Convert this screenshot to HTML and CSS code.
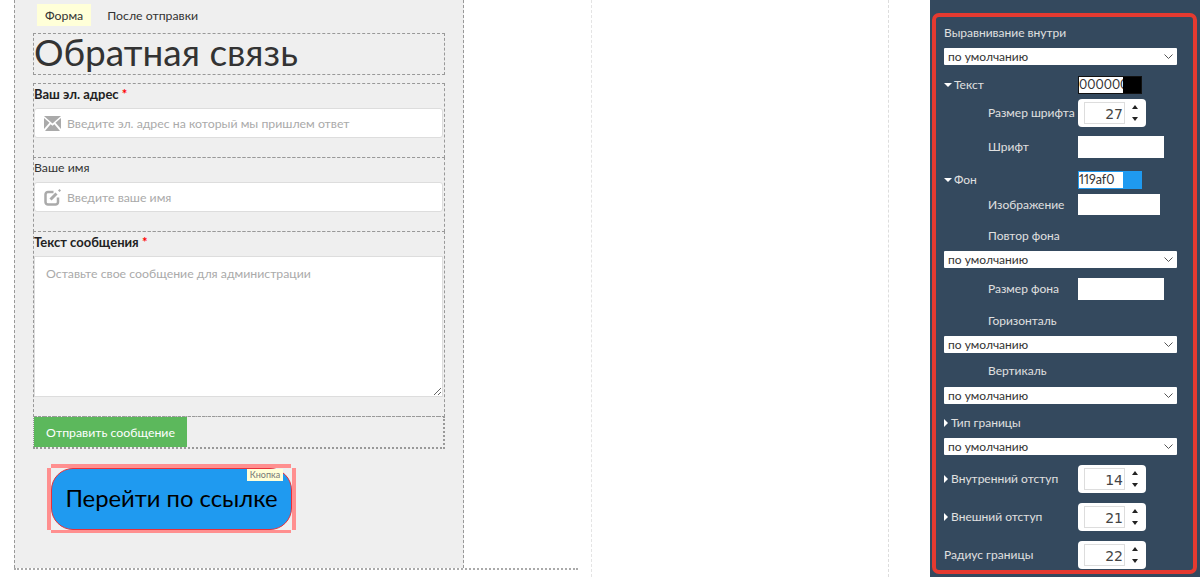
FILE: index.html

```html
<!DOCTYPE html>
<html lang="en">
<head>
    <meta charset="UTF-8">
    <meta name="viewport" content="width=device-width, initial-scale=1.0">
    <title>Редактор формы</title>
    <link rel="stylesheet" href="styles.css">
</head>
<body>
    <div class="page">
        <div class="canvas">
            <div class="workspace">
                <div class="pageEdge">
                    <div class="panel">
                        <div class="tabs">
                            <div class="tab activeTab">Форма</div>
                            <div class="tab">После отправки</div>
                        </div>

                        <div class="block titleBlock"><h1>Обратная связь</h1></div>

                        <div class="block fieldBlock">
                            <label class="fieldLabel boldLabel">Ваш эл. адрес <span class="required">*</span></label>
                            <div class="inputWrap">
                                <svg class="inputIcon" viewBox="0 0 17 15"><path d="M0 0h17L8.500 7.500z"/><path d="M0 2v11l5.500-6.200z"/><path d="M17 2v11l-5.500-6.200z"/><path d="M1 15l5.600-6.800 1.900 1.600 1.900-1.600L16 15z"/></svg>
                                <input type="text" placeholder="Введите эл. адрес на который мы пришлем ответ">
                            </div>
                        </div>

                        <div class="block fieldBlock">
                            <label class="fieldLabel">Ваше имя</label>
                            <div class="inputWrap">
                                <svg class="inputIcon" viewBox="0 0 17 17"><path class="iconStroke" d="M9.500 3H4A2.500 2.500 0 0 0 1.500 5.500V13A2.500 2.500 0 0 0 4 15.500h7.500A2.500 2.500 0 0 0 14 13V8.500"/><path class="iconPen" d="M6.500 10.500l6-6"/><path d="M14 1.500l1.500-1.500 1.500 1.500-1.500 1.500z"/></svg>
                                <input type="text" placeholder="Введите ваше имя">
                            </div>
                        </div>

                        <div class="block messageBlock">
                            <label class="fieldLabel boldLabel">Текст сообщения <span class="required">*</span></label>
                            <textarea placeholder="Оставьте свое сообщение для администрации"></textarea>
                        </div>

                        <div class="block submitBlock">
                            <button class="submitButton">Отправить сообщение</button>
                        </div>

                        <div class="linkFrame">
                            <span class="handle handleTop"></span>
                            <span class="handle handleRight"></span>
                            <span class="handle handleBottom"></span>
                            <span class="handle handleLeft"></span>
                            <button class="linkButton">Перейти по ссылке</button>
                            <span class="linkBadge">Кнопка</span>
                        </div>
                    </div>
                </div>
            </div>
            <div class="gutter"></div>
        </div>

        <div class="sidebar">
            <div class="settings">
                <div class="row mt7">Выравнивание внутри</div>
                <select class="mt6"><option>по умолчанию</option></select>

                <div class="row mt11">
                    <span class="rowName"><span class="arrowDown"></span>Текст</span>
                    <div class="colorBox blackBox"><span class="colorValue">000000</span></div>
                </div>
                <div class="row mt5">
                    <span class="rowName subName">Размер шрифта</span>
                    <div class="spinner"><span class="spinnerValue">27</span><span class="spinnerArrows"></span></div>
                </div>
                <div class="row mt9">
                    <span class="rowName subName">Шрифт</span>
                    <div class="textBox wideBox"></div>
                </div>

                <div class="row mt13">
                    <span class="rowName"><span class="arrowDown"></span>Фон</span>
                    <div class="colorBox blueBox"><span class="colorValue">119af0</span></div>
                </div>
                <div class="row mt5">
                    <span class="rowName subName">Изображение</span>
                    <div class="textBox imageBox"></div>
                </div>
                <div class="row mt12 subName">Повтор фона</div>
                <select class="mt6"><option>по умолчанию</option></select>
                <div class="row mt10">
                    <span class="rowName subName">Размер фона</span>
                    <div class="textBox wideBox"></div>
                </div>
                <div class="row mt12 subName">Горизонталь</div>
                <select class="mt6"><option>по умолчанию</option></select>
                <div class="row mt9 subName">Вертикаль</div>
                <select class="mt7"><option>по умолчанию</option></select>

                <div class="row mt10"><span class="arrowRight"></span>Тип границы</div>
                <select class="mt6"><option>по умолчанию</option></select>

                <div class="row mt10">
                    <span class="rowName"><span class="arrowRight"></span>Внутренний отступ</span>
                    <div class="spinner"><span class="spinnerValue">14</span><span class="spinnerArrows"></span></div>
                </div>
                <div class="row mt10">
                    <span class="rowName"><span class="arrowRight"></span>Внешний отступ</span>
                    <div class="spinner"><span class="spinnerValue">21</span><span class="spinnerArrows"></span></div>
                </div>
                <div class="row mt10">
                    <span class="rowName">Радиус границы</span>
                    <div class="spinner"><span class="spinnerValue">22</span><span class="spinnerArrows"></span></div>
                </div>
            </div>
        </div>
    </div>
</body>
</html>
```

FILE: styles.css

```css
* {
    box-sizing: border-box;
}

body {
    margin: 0;
    font-family: Lato, Roboto, sans-serif;
    font-size: 12.3px;
    color: #333;
    background-color: white;
}

.page {
    display: flex;
    height: 577px;
    overflow: hidden;
}

.canvas {
    display: flex;
    flex: 0 0 930px;
}

.workspace {
    flex: 0 0 592px;
    height: 577px;
    padding-left: 14px;
    border-right: 1px dashed #e4e4e4;
}

.gutter {
    flex: 0 0 297px;
    border-right: 1px dashed #ddd;
}

.pageEdge {
    width: 564px;
    height: 570px;
    border-bottom: 2px dotted #aaa;
}

.panel {
    width: 450px;
    height: 568px;
    padding: 4px 18px 0 18px;
    background-color: #efefef;
    border-left: 1px dashed #999;
    border-right: 1px dashed #999;
}

.tabs {
    display: flex;
    height: 22px;
    margin: 0 0 7px 4px;
}

.tab {
    padding: 3px 8px;
    margin-right: 8px;
    line-height: 17px;
}

.activeTab {
    background-color: #ffffd8;
}

.block {
    width: 412px;
    border: 1px dashed #999;
}

.titleBlock {
    height: 42px;
    margin-bottom: 8px;
}

h1 {
    margin: 0;
    font-size: 37px;
    font-weight: 400;
    line-height: 35px;
    color: #333;
}

.fieldBlock {
    height: 75px;
    margin-bottom: -1px;
}

.messageBlock {
    height: 186px;
    margin-bottom: -1px;
}

.fieldLabel {
    display: block;
    height: 24px;
    line-height: 19px;
}

.boldLabel {
    font-size: 13px;
    line-height: 20px;
    font-weight: 700;
    color: #222;
}

.required {
    color: red;
}

.inputWrap {
    display: flex;
    align-items: center;
    width: 409px;
    height: 30px;
    padding-left: 9px;
    background-color: white;
    border: 1px solid #ddd;
    border-radius: 3px;
}

.inputIcon {
    flex: 0 0 17px;
    height: 17px;
    margin-right: 6px;
    fill: #aaa;
}

.iconStroke {
    fill: none;
    stroke: #aaa;
    stroke-width: 2.500;
}

.iconPen {
    fill: none;
    stroke: #aaa;
    stroke-width: 3;
}

input {
    flex: 1;
    padding: 1px 0 0 0;
    border: 0;
    outline: 0;
    font: inherit;
}

input::placeholder, textarea::placeholder {
    color: #aaa;
    opacity: 1;
}

textarea {
    display: block;
    width: 409px;
    height: 141px;
    padding: 9px 11px;
    border: 1px solid #ddd;
    font: inherit;
}

.submitBlock {
    height: 33px;
    border-width: 1px 2px 2px 1px;
    border-style: dotted;
}

.submitButton {
    display: block;
    width: 153px;
    height: 30px;
    padding: 0;
    border: 0;
    font: inherit;
    color: white;
    background-color: #5cb85c;
}

.linkFrame {
    position: relative;
    width: 241px;
    height: 62px;
    margin: 19px 0 0 18px;
}

.linkButton {
    display: block;
    width: 241px;
    height: 62px;
    padding: 0 0 3px 0;
    border: 1px solid #e8303a;
    border-radius: 22px;
    font: inherit;
    font-size: 23.8px;
    white-space: nowrap;
    color: black;
    background-color: #1f9af0;
}

.handle {
    position: absolute;
    background-color: #ff8f8f;
}

.handleTop {
    top: -4px;
    left: 0;
    width: 240px;
    height: 4px;
}

.handleBottom {
    bottom: -3px;
    left: 0;
    width: 240px;
    height: 3px;
}

.handleLeft {
    top: 0;
    left: -4px;
    width: 4px;
    height: 62px;
}

.handleRight {
    top: 0;
    right: -4px;
    width: 4px;
    height: 62px;
}

.linkBadge {
    position: absolute;
    top: 1px;
    right: 9px;
    width: 36px;
    height: 12px;
    font-size: 9px;
    line-height: 12px;
    text-align: center;
    color: #777;
    background-color: #ffffd8;
}

.sidebar {
    flex: 1;
    padding: 13px 3px 3px 2px;
    background-color: #34495e;
}

.settings {
    width: 265px;
    height: 561px;
    padding: 0 17px 0 8px;
    border: 4px solid #e53a30;
    border-radius: 7px;
    font-size: 12px;
    color: #e0e0e0;
}

.row {
    display: flex;
    align-items: center;
    min-height: 18px;
    line-height: 18px;
}

.rowName {
    display: flex;
    align-items: center;
    width: 134px;
    white-space: nowrap;
}

.subName {
    padding-left: 44px;
}

.mt5 { margin-top: 5px; }
.mt6 { margin-top: 6px; }
.mt7 { margin-top: 7px; }
.mt9 { margin-top: 9px; }
.mt10 { margin-top: 10px; }
.mt11 { margin-top: 11px; }
.mt12 { margin-top: 12px; }
.mt13 { margin-top: 13px; }

select {
    display: block;
    width: 233px;
    height: 17px;
    padding: 0 4px;
    border: 0;
    border-radius: 1px;
    font: inherit;
    color: #333;
    appearance: none;
    background: white url("data:image/svg+xml,%3Csvg xmlns='http://www.w3.org/2000/svg' width='9' height='5'%3E%3Cpath d='M.5.5l4 4 4-4' fill='none' stroke='%23555'/%3E%3C/svg%3E") no-repeat right 4px center;
}

.arrowDown {
    width: 0;
    height: 0;
    margin-right: 2px;
    border-left: 4px solid transparent;
    border-right: 4px solid transparent;
    border-top: 4px solid white;
}

.arrowRight {
    width: 0;
    height: 0;
    margin-right: 3px;
    border-top: 4px solid transparent;
    border-bottom: 4px solid transparent;
    border-left: 4px solid white;
}

.colorBox {
    width: 64px;
    height: 18px;
    border: 1px solid #111;
}

.blackBox {
    background-color: black;
}

.blueBox {
    background-color: #1f9af0;
    border-color: #1f9af0;
}

.colorValue {
    display: block;
    width: 44px;
    height: 16px;
    font-size: 12.5px;
    font-variant-numeric: proportional-nums;
    line-height: 16px;
    overflow: hidden;
    color: #333;
    background-color: white;
}

.spinner {
    display: flex;
    align-items: center;
    width: 68px;
    height: 28px;
    padding-left: 6px;
    background-color: white;
    border-radius: 4px;
}

.spinnerValue {
    width: 41px;
    height: 22px;
    padding-right: 1px;
    border: 1px solid #ddd;
    font-family: "DejaVu Sans", sans-serif;
    font-size: 14px;
    line-height: 22px;
    text-align: right;
    color: #444;
}

.spinnerArrows {
    position: relative;
    width: 21px;
    height: 22px;
}

.spinnerArrows::before, .spinnerArrows::after {
    content: "";
    position: absolute;
    left: 7px;
    border-left: 3.500px solid transparent;
    border-right: 3.500px solid transparent;
}

.spinnerArrows::before {
    top: 3px;
    border-bottom: 4px solid #222;
}

.spinnerArrows::after {
    bottom: 3px;
    border-top: 4px solid #222;
}

.textBox {
    background-color: white;
}

.wideBox {
    width: 86px;
    height: 22px;
}

.imageBox {
    width: 82px;
    height: 21px;
}
```
